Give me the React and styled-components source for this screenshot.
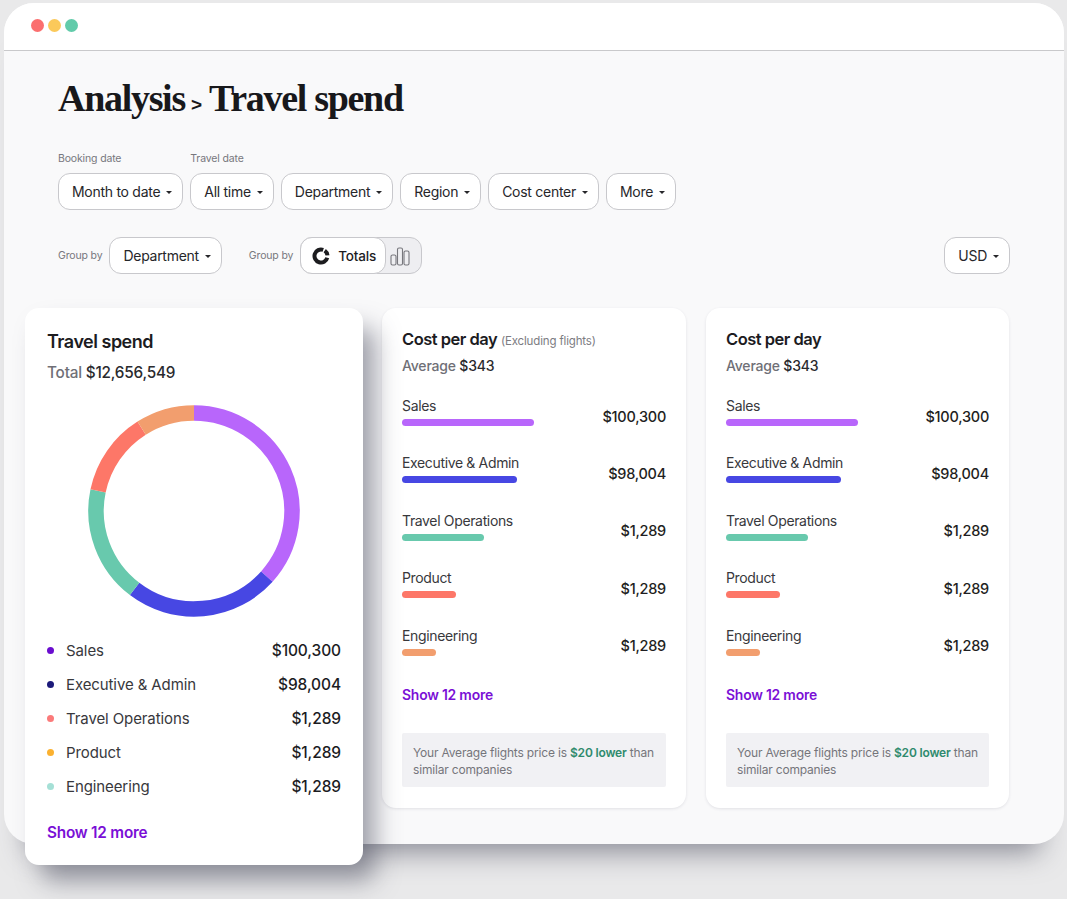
import React from 'react'
import styled, { createGlobalStyle } from 'styled-components'

const GlobalStyle = createGlobalStyle`
  html, body {
    margin: 0;
    padding: 0;
    height: 899px;
    overflow: hidden;
    background: #e9e9ea;
    font-family: Inter, "Liberation Sans", sans-serif;
    color: #1c1c1f;
  }
  * { box-sizing: border-box; }
`

const Page = styled.div`
  padding: 3px 3px 0 4px;
`

const Window = styled.div`
  height: 841px;
  border-radius: 30px;
  background: #f9f9fa;
  box-shadow: 0 32px 28px -24px rgba(70, 72, 90, 0.58);
`

const TitleBar = styled.div`
  height: 48px;
  padding-left: 27px;
  display: flex;
  align-items: center;
  gap: 4px;
  padding-bottom: 2px;
  background: #fff;
  border-radius: 30px 30px 0 0;
  border-bottom: 1px solid #c9c9cb;
`

const Light = styled.span`
  width: 13px;
  height: 13px;
  border-radius: 50%;
  background: ${p => p.$color};
`

const Content = styled.div`
  padding: 24px 54px 0;
`

const Title = styled.h1`
  margin: 0;
  height: 52px;
  font-family: "Liberation Serif", serif;
  font-size: 38px;
  line-height: 46px;
  font-weight: 700;
  letter-spacing: -1.3px;
  color: #18181b;
  small {
    font-size: 19px;
    font-family: "Liberation Sans", sans-serif;
    margin: 0 7px 0 6px;
    letter-spacing: 0;
  }
`

const FilterRow = styled.div`
  margin-top: 25px;
  display: flex;
  align-items: flex-end;
  gap: 7px;
`

const FilterGroup = styled.div`
  display: flex;
  flex-direction: column;
  gap: 8px;
`

const SmallLabel = styled.span`
  font-size: 10.5px;
  line-height: 13px;
  letter-spacing: -0.15px;
  color: #77777d;
`

const GroupRow = styled.div`
  margin-top: 27px;
  display: flex;
  align-items: center;
`

const GroupLabel = styled(SmallLabel)`
  margin-right: 7px;
  margin-left: ${p => p.$gap || 0}px;
`

const Select = styled.div`
  height: 37px;
  padding: 0 10px 0 13px;
  display: flex;
  align-items: center;
  gap: 6px;
  background: #fff;
  border: 1px solid #c8c8cc;
  border-radius: 12px;
  font-size: 14px;
  letter-spacing: -0.28px;
  color: #26262a;
  white-space: nowrap;
  margin-left: ${p => (p.$push ? 'auto' : 0)};
`

const Caret = styled.i`
  width: 0;
  height: 0;
  margin-top: 2px;
  border-left: 3px solid transparent;
  border-right: 3px solid transparent;
  border-top: 3px solid #26262a;
`

const Toggle = styled.div`
  height: 37px;
  width: 122px;
  display: flex;
  align-items: stretch;
  background: #eeeef1;
  border: 1px solid #c8c8cc;
  border-radius: 12px;
`

const ToggleOn = styled.div`
  width: 86px;
  margin: -1px 0 -1px -1px;
  display: flex;
  align-items: center;
  gap: 8px;
  padding-left: 11px;
  background: #fff;
  border: 1px solid #c8c8cc;
  border-radius: 12px;
  font-size: 13.5px;
  font-weight: 500;
  letter-spacing: -0.2px;
`

const ToggleOff = styled.div`
  flex: 1;
  display: flex;
  align-items: center;
  padding-left: 4px;
`

const Cards = styled.div`
  margin: 34px 0 0 -33px;
  display: flex;
  align-items: flex-start;
`

const Card = styled.section`
  width: ${p => p.$width}px;
  height: 500px;
  margin-left: ${p => p.$gap}px;
  padding: 21px 20px 0;
  background: #fff;
  border-radius: 14px;
  box-shadow: 0 1px 3px rgba(60, 60, 80, 0.12);
`

const MainCard = styled.section`
  position: relative;
  z-index: 1;
  width: 338px;
  height: 557px;
  padding: 23px 22px 0;
  background: #fff;
  border-radius: 14px;
  box-shadow: 14px 18px 24px -2px rgba(70, 72, 90, 0.5);
`

const MainTitle = styled.h2`
  margin: 0;
  font-size: 18px;
  line-height: 22px;
  font-weight: 600;
  letter-spacing: -0.5px;
`

const CardTitle = styled(MainTitle)`
  font-size: 16.5px;
  line-height: 20px;
  height: 20px;
  span {
    font-size: 11.5px;
    line-height: 1;
    font-weight: 400;
    letter-spacing: -0.15px;
    color: #7c7c82;
  }
`

const Total = styled.div`
  margin-top: ${p => p.$top}px;
  font-size: ${p => p.$size}px;
  line-height: 18px;
  font-weight: 500;
  letter-spacing: -0.2px;
  color: #2a2a2e;
  span {
    color: #6f6f76;
  }
`

const DonutWrap = styled.div`
  margin: 23px 0 0 41px;
  height: 212px;
`

const Legend = styled.ul`
  list-style: none;
  margin: 16px 0 0;
  padding: 0;
`

const LegendRow = styled.li`
  height: 34px;
  display: flex;
  align-items: center;
  font-size: 15px;
  letter-spacing: -0.1px;
  color: #38383c;
  b {
    margin-left: auto;
    font-size: 15.5px;
    font-weight: 500;
    color: #1c1c1f;
  }
`

const Dot = styled.i`
  width: 7px;
  height: 7px;
  margin-right: 12px;
  border-radius: 50%;
  background: ${p => p.$color};
`

const MoreLink = styled.a`
  display: block;
  margin-top: ${p => p.$top}px;
  font-size: ${p => p.$size}px;
  line-height: 18px;
  font-weight: 600;
  letter-spacing: -0.2px;
  color: #7a0fd6;
`

const BarList = styled.div`
  margin-top: 22px;
`

const BarRow = styled.div`
  height: 57.4px;
  display: flex;
  align-items: flex-start;
  justify-content: space-between;
`

const BarInfo = styled.div`
  font-size: 14px;
  line-height: 18px;
  letter-spacing: -0.35px;
  color: #38383c;
`

const Bar = styled.div`
  height: 7px;
  margin-top: 4px;
  border-radius: 4px;
  background: ${p => p.$color};
`

const BarValue = styled.div`
  margin-top: 10.5px;
  font-size: 14.5px;
  line-height: 18px;
  font-weight: 500;
  letter-spacing: -0.25px;
  color: #1f1f22;
`

const Note = styled.p`
  margin: 29px 0 0;
  height: 54px;
  padding: 11px 5px 0 11px;
  background: #f1f1f4;
  border-radius: 2px;
  font-size: 12px;
  line-height: 17px;
  letter-spacing: -0.18px;
  color: #75757b;
  b {
    font-weight: 600;
    color: #2f8a6d;
  }
`

const FILTERS = [
  { text: 'Month to date', label: 'Booking date' },
  { text: 'All time', label: 'Travel date' },
  { text: 'Department' },
  { text: 'Region' },
  { text: 'Cost center' },
  { text: 'More' },
]

const LEGEND = [
  { name: 'Sales', value: '$100,300', color: '#6a0dcf' },
  { name: 'Executive & Admin', value: '$98,004', color: '#1c1a7a' },
  { name: 'Travel Operations', value: '$1,289', color: '#fb7a7a' },
  { name: 'Product', value: '$1,289', color: '#fbb130' },
  { name: 'Engineering', value: '$1,289', color: '#a5e0d6' },
]

const BARS = [
  { name: 'Sales', value: '$100,300', color: '#b866fb', width: 132 },
  { name: 'Executive & Admin', value: '$98,004', color: '#4747e3', width: 115 },
  { name: 'Travel Operations', value: '$1,289', color: '#68c9ad', width: 82 },
  { name: 'Product', value: '$1,289', color: '#fd7768', width: 54 },
  { name: 'Engineering', value: '$1,289', color: '#f29e6e', width: 34 },
]

const SEGMENTS = [
  { from: 0, to: 132, color: '#b866fb' },
  { from: 132, to: 217.3, color: '#4747e3' },
  { from: 217.3, to: 281.8, color: '#68c9ad' },
  { from: 281.8, to: 327.7, color: '#fd7768' },
  { from: 327.7, to: 360, color: '#f29e6e' },
]

const polar = (deg, r) => {
  const a = (deg * Math.PI) / 180
  return [106 + r * Math.sin(a), 106 - r * Math.cos(a)]
}

const Donut = () => (
  <svg width="212" height="212" viewBox="0 0 212 212">
    {SEGMENTS.map(s => {
      const [x1, y1] = polar(s.from, 98)
      const [x2, y2] = polar(s.to, 98)
      const large = s.to - s.from > 180 ? 1 : 0
      return (
        <path
          key={s.from}
          d={`M${x1} ${y1}A98 98 0 ${large} 1 ${x2} ${y2}`}
          fill="none"
          stroke={s.color}
          strokeWidth="15.5"
        />
      )
    })}
  </svg>
)

const TotalsIcon = () => (
  <svg width="18" height="18" viewBox="0 0 18 18" fill="none" stroke="#1c1c1f" strokeWidth="4">
    <path d="M12.73 3.68A6.5 6.5 0 0 1 15.48 8.43" />
    <path d="M15.28 10.68A6.5 6.5 0 1 1 11.22 2.89" />
  </svg>
)

const BarsIcon = () => (
  <svg width="20" height="20" viewBox="0 0 20 20" fill="none" stroke="#77777d" strokeWidth="1.1">
    <rect x="1" y="9" width="5" height="10" rx="1.5" />
    <rect x="7.5" y="2" width="5" height="17" rx="1.5" />
    <rect x="14" y="5" width="5" height="14" rx="1.5" />
  </svg>
)

const Dropdown = ({ text, push }) => (
  <Select $push={push}>
    {text}
    <Caret />
  </Select>
)

const CostCard = ({ gap, width, note }) => (
  <Card $gap={gap} $width={width}>
    <CardTitle>Cost per day {note && <span>(Excluding flights)</span>}</CardTitle>
    <Total $top={8} $size={14}><span>Average</span> $343</Total>
    <BarList>
      {BARS.map(b => (
        <BarRow key={b.name}>
          <BarInfo>
            {b.name}
            <Bar $color={b.color} style={{ width: b.width }} />
          </BarInfo>
          <BarValue>{b.value}</BarValue>
        </BarRow>
      ))}
    </BarList>
    <MoreLink $top={2} $size={13.9}>Show 12 more</MoreLink>
    <Note>Your Average flights price is <b>$20 lower</b> than<br />similar companies</Note>
  </Card>
)

export default function App() {
  return (
    <Page>
      <GlobalStyle />
      <Window>
        <TitleBar>
          <Light $color="#fb6f6f" />
          <Light $color="#fbc95a" />
          <Light $color="#62cbaa" />
        </TitleBar>
        <Content>
          <Title>Analysis<small>&gt;</small>Travel spend</Title>
          <FilterRow>
            {FILTERS.map(f => (
              <FilterGroup key={f.text}>
                {f.label && <SmallLabel>{f.label}</SmallLabel>}
                <Dropdown text={f.text} />
              </FilterGroup>
            ))}
          </FilterRow>
          <GroupRow>
            <GroupLabel>Group by</GroupLabel>
            <Dropdown text="Department" />
            <GroupLabel $gap={27}>Group by</GroupLabel>
            <Toggle>
              <ToggleOn><TotalsIcon />Totals</ToggleOn>
              <ToggleOff><BarsIcon /></ToggleOff>
            </Toggle>
            <Dropdown text="USD" push />
          </GroupRow>
          <Cards>
            <MainCard>
              <MainTitle>Travel spend</MainTitle>
              <Total $top={11} $size={15.3}><span>Total</span> $12,656,549</Total>
              <DonutWrap><Donut /></DonutWrap>
              <Legend>
                {LEGEND.map(l => (
                  <LegendRow key={l.name}>
                    <Dot $color={l.color} />
                    {l.name}
                    <b>{l.value}</b>
                  </LegendRow>
                ))}
              </Legend>
              <MoreLink $top={21} $size={15.3}>Show 12 more</MoreLink>
            </MainCard>
            <CostCard gap={19} width={304} note />
            <CostCard gap={20} width={303} />
          </Cards>
        </Content>
      </Window>
    </Page>
  )
}
